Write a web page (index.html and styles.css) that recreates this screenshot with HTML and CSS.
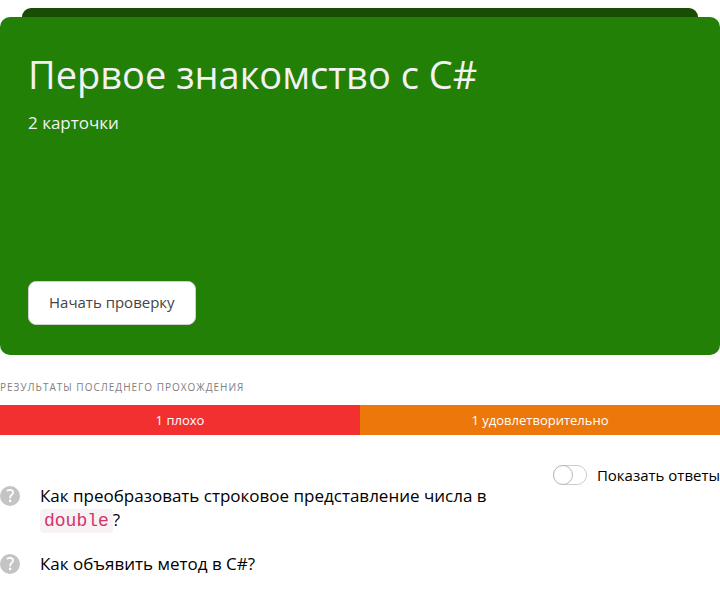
FILE: index.html
```html
<!DOCTYPE html>
<html lang="ru">
<head>
<meta charset="utf-8">
<meta name="viewport" content="width=device-width, initial-scale=1">
<title>Первое знакомство с C#</title>
<link rel="stylesheet" href="styles.css">
</head>
<body>
<main>
  <div class="deck">
    <div class="deck-back"></div>
    <section class="card">
      <h1 class="card-title">Первое знакомство с C#</h1>
      <p class="card-count">2 карточки</p>
      <button class="start" type="button">Начать проверку</button>
    </section>
  </div>
  <h2 class="caption">Результаты последнего прохождения</h2>
  <div class="results">
    <div class="result result-bad">1 плохо</div>
    <div class="result result-fair">1 удовлетворительно</div>
  </div>
  <div class="review">
    <ul class="questions">
      <li class="question">
        <svg class="mark" viewBox="0 0 20 20" aria-hidden="true"><circle cx="10" cy="10" r="10" fill="#c4c4c4"/><path d="M7 5C7.8 4.2 8.8 3.8 10 3.8C11.9 3.8 13.1 4.8 13.1 6.4C13.1 8.7 10.2 9.1 10.2 11.2V12.2" fill="none" stroke="#fff" stroke-width="1.8"/><circle cx="10.1" cy="14.9" r="1.3" fill="#fff"/></svg>
        <span>Как преобразовать строковое представление числа в <code class="code">double</code>?</span>
      </li>
      <li class="question">
        <svg class="mark" viewBox="0 0 20 20" aria-hidden="true"><circle cx="10" cy="10" r="10" fill="#c4c4c4"/><path d="M7 5C7.8 4.2 8.8 3.8 10 3.8C11.9 3.8 13.1 4.8 13.1 6.4C13.1 8.7 10.2 9.1 10.2 11.2V12.2" fill="none" stroke="#fff" stroke-width="1.8"/><circle cx="10.1" cy="14.9" r="1.3" fill="#fff"/></svg>
        <span>Как объявить метод в C#?</span>
      </li>
    </ul>
    <label class="toggle"><input class="switch" type="checkbox">Показать ответы</label>
  </div>
</main>
</body>
</html>
```
FILE: styles.css
```css
*, *::before { box-sizing: border-box; }

body {
  margin: 0;
  padding-top: 8px;
  background: #fff;
  color: #000;
  font-family: "Open Sans", "Noto Sans", sans-serif;
}

.deck-back {
  height: 9px;
  margin: 0 22px;
  border-radius: 9px 9px 0 0;
  background: #194d06;
}

.card {
  display: flex;
  flex-direction: column;
  align-items: flex-start;
  min-height: 338px;
  padding: 32px 28px 30px;
  border-radius: 10px;
  background: #228007;
  color: #f2f2f2;
}

.card-title {
  margin: 0 0 12px;
  font-size: 38px;
  font-weight: 400;
  line-height: 50px;
}

.card-count {
  margin: 0;
  font-size: 17px;
  line-height: 24px;
}

.start {
  height: 44px;
  margin-top: auto;
  padding: 0 20px 2px;
  border: 1px solid #d0d0d0;
  border-radius: 8px;
  background: #fff;
  color: #444;
  font-family: inherit;
  font-size: 15px;
}

.caption {
  margin: 24px 0 10px;
  color: #808080;
  font-size: 10px;
  font-weight: 400;
  line-height: 16px;
  letter-spacing: 1px;
  text-transform: uppercase;
}

.results { display: flex; }

.result {
  flex: 1;
  color: #fff;
  font-size: 13px;
  font-weight: 500;
  line-height: 30px;
  text-align: center;
}

.result-bad { background: #f23030; }
.result-fair { background: #ec770a; }

.review {
  display: flex;
  justify-content: space-between;
  align-items: flex-start;
  gap: 24px;
  padding-top: 28px;
}

.questions {
  display: grid;
  gap: 20px;
  margin: 0;
  padding: 21px 0;
  list-style: none;
  font-size: 17px;
  line-height: 24px;
}

.question {
  display: flex;
  gap: 20px;
}

.mark {
  flex: none;
  width: 20px;
  height: 20px;
  margin-top: 2px;
}

.code {
  padding: 2px 4px;
  border-radius: 4px;
  background: #f7f2f4;
  color: #d6336c;
  font-family: "Liberation Mono", monospace;
  font-size: 18px;
  line-height: 20px;
}

.toggle {
  display: flex;
  flex: none;
  align-items: center;
  gap: 10px;
  font-size: 15px;
  line-height: 24px;
}

.switch {
  appearance: none;
  width: 34px;
  height: 20px;
  margin: 0;
  border: 1px solid #ccc;
  border-radius: 10px;
  background: #fff;
}

.switch::before {
  content: "";
  display: block;
  width: 20px;
  height: 20px;
  margin: -1px;
  border: 1px solid #b8b8b8;
  border-radius: 50%;
  background: #fff;
}

.switch:checked { background: #228007; }
.switch:checked::before { margin-left: 13px; }
```
